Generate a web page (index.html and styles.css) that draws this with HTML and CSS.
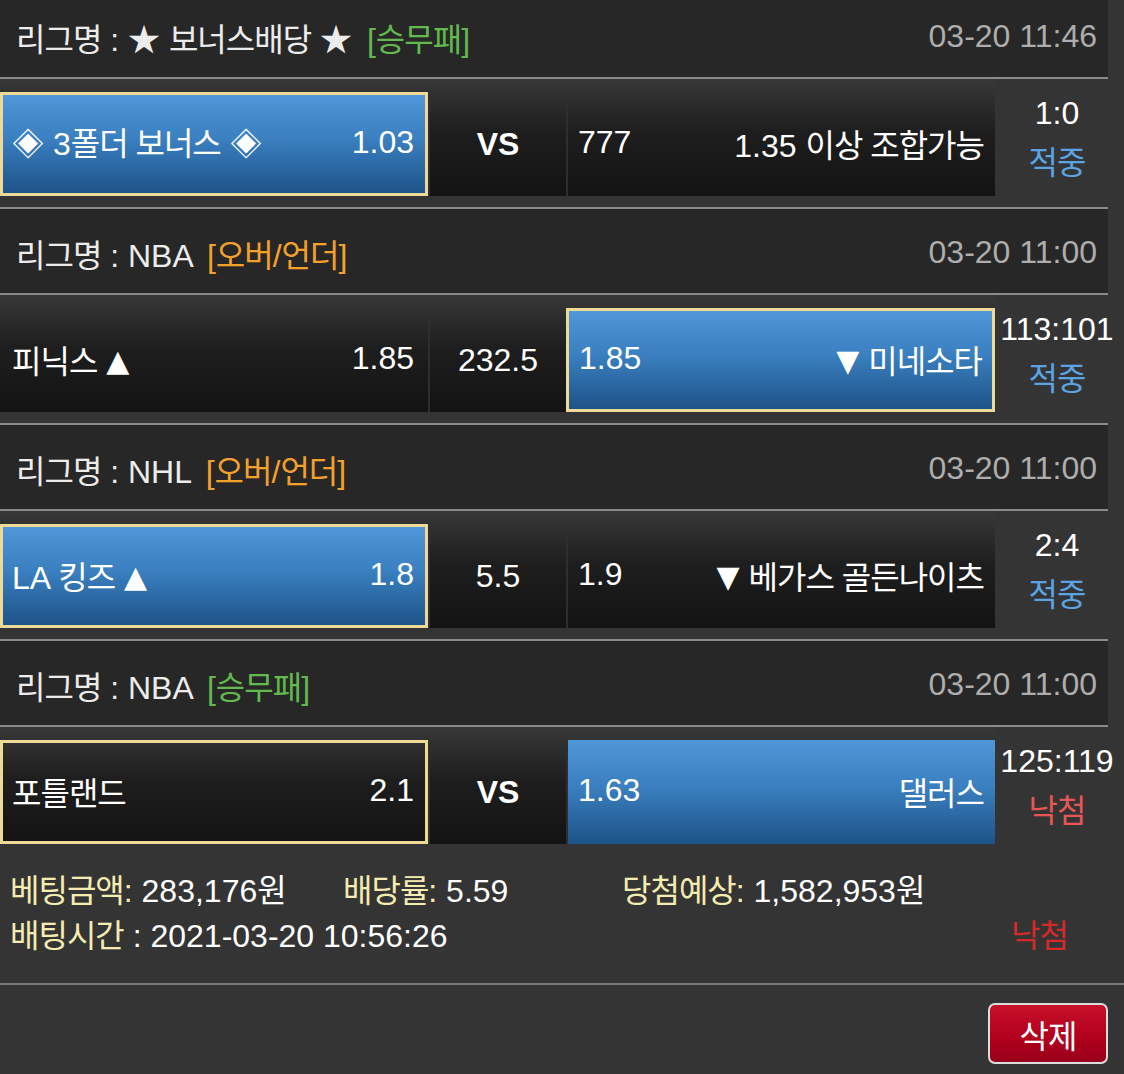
FILE: index.html
```html
<!DOCTYPE html>
<html lang="ko">
<head>
<meta charset="utf-8">
<title>배팅내역</title>
<link rel="stylesheet" href="styles.css">
</head>
<body>
<div class="board">
  <section class="game">
    <div class="league">
      <span class="lg-name"><span class="ko">리그명</span> : ★ <span class="ko">보너스배당</span> ★ <span class="tag green">[<span class="ko">승무패</span>]</span></span>
      <span class="time">03-20 11:46</span>
    </div>
    <div class="match">
      <div class="bets">
        <div class="cell side home pick win"><span>◈ 3<span class="ko">폴더 보너스</span> ◈</span><span>1.03</span></div>
        <div class="cell mid"><span class="vs">VS</span></div>
        <div class="cell side away"><span>777</span><span>1.35 <span class="ko">이상 조합가능</span></span></div>
      </div>
      <div class="result"><div class="score">1:0</div><div class="status hit ko">적중</div></div>
    </div>
  </section>

  <section class="game">
    <div class="league">
      <span class="lg-name"><span class="ko">리그명</span> : NBA <span class="tag orange">[<span class="ko">오버</span>/<span class="ko">언더</span>]</span></span>
      <span class="time">03-20 11:00</span>
    </div>
    <div class="match">
      <div class="bets">
        <div class="cell side home"><span><span class="ko">피닉스</span> <span class="tri">▲</span></span><span>1.85</span></div>
        <div class="cell mid"><span>232.5</span></div>
        <div class="cell side away pick win"><span>1.85</span><span><span class="tri">▼</span> <span class="ko">미네소타</span></span></div>
      </div>
      <div class="result"><div class="score">113:101</div><div class="status hit ko">적중</div></div>
    </div>
  </section>

  <section class="game">
    <div class="league">
      <span class="lg-name"><span class="ko">리그명</span> : NHL <span class="tag orange">[<span class="ko">오버</span>/<span class="ko">언더</span>]</span></span>
      <span class="time">03-20 11:00</span>
    </div>
    <div class="match">
      <div class="bets">
        <div class="cell side home pick win"><span>LA <span class="ko">킹즈</span> <span class="tri">▲</span></span><span>1.8</span></div>
        <div class="cell mid"><span>5.5</span></div>
        <div class="cell side away"><span>1.9</span><span><span class="tri">▼</span> <span class="ko">베가스 골든나이츠</span></span></div>
      </div>
      <div class="result"><div class="score">2:4</div><div class="status hit ko">적중</div></div>
    </div>
  </section>

  <section class="game last">
    <div class="league">
      <span class="lg-name"><span class="ko">리그명</span> : NBA <span class="tag green">[<span class="ko">승무패</span>]</span></span>
      <span class="time">03-20 11:00</span>
    </div>
    <div class="match">
      <div class="bets">
        <div class="cell side home pick"><span class="ko">포틀랜드</span><span>2.1</span></div>
        <div class="cell mid"><span class="vs">VS</span></div>
        <div class="cell side away win"><span>1.63</span><span class="ko">댈러스</span></div>
      </div>
      <div class="result"><div class="score">125:119</div><div class="status miss ko">낙첨</div></div>
    </div>
  </section>
</div>

<div class="summary">
  <div class="sum-row">
    <span class="col c1"><span class="label ko">베팅금액</span><span class="label">:</span> 283,176<span class="ko">원</span></span>
    <span class="col c2"><span class="label ko">배당률</span><span class="label">:</span> 5.59</span>
    <span class="col c3"><span class="label ko">당첨예상</span><span class="label">:</span> 1,582,953<span class="ko">원</span></span>
  </div>
  <div class="sum-row two">
    <span class="col"><span class="label ko">배팅시간</span> : 2021-03-20 10:56:26</span>
    <span class="final ko">낙첨</span>
  </div>
</div>

<div class="actions">
  <button class="btn-delete ko" type="button">삭제</button>
</div>
</body>
</html>
```

FILE: styles.css
```css
html, body {
  margin: 0;
  padding: 0;
}

body {
  background: #343434;
  color: #ffffff;
  font-family: "Liberation Sans", "Noto Sans CJK KR", sans-serif;
  font-size: 32px;
  width: 1124px;
  overflow: hidden;
}

.ko {
  letter-spacing: -1px;
}

.tri {
  font-family: "DejaVu Sans", sans-serif;
  font-size: 30px;
  vertical-align: 2px;
}

.board {
  width: 1108px;
  margin-top: -7px;
}

.league {
  box-sizing: content-box;
  height: 81px;
  padding: 3px 11px 0 16px;
  background: #272727;
  border-bottom: 2px solid #8a8a8a;
  display: flex;
  align-items: center;
  justify-content: space-between;
  color: #ececec;
  white-space: nowrap;
}

.tag {
  margin-left: 6px;
}

.green { color: #62b94e; }
.orange { color: #f4a12c; }

.time {
  color: #adadad;
}

.match {
  display: flex;
  height: 128px;
  border-bottom: 2px solid #8a8a8a;
}

.game.last .match {
  border-bottom: none;
}

.bets {
  flex: none;
  width: 995px;
  height: 117px;
  box-sizing: border-box;
  padding-top: 13px;
  display: flex;
  background: linear-gradient(to bottom, #383838 0%, #1e1e1e 45%, #131313 100%);
}

.cell {
  height: 104px;
  box-sizing: border-box;
  display: flex;
  align-items: center;
  white-space: nowrap;
  padding-bottom: 3px;
}

.side {
  justify-content: space-between;
}

.home {
  width: 428px;
  padding-left: 12px;
  padding-right: 14px;
}

.mid {
  width: 138px;
  justify-content: center;
  border-left: 2px solid #2e2e2e;
  padding-bottom: 0;
}

.away {
  width: 429px;
  padding-left: 10px;
  padding-right: 11px;
  border-left: 2px solid #2e2e2e;
}

.vs {
  font-weight: bold;
}

.cell.win {
  background: linear-gradient(to bottom, #4f97d8 0%, #3a7fc0 45%, #1d5387 100%);
}

.cell.pick {
  border: 3px solid #efd996;
}

.home.pick {
  padding-left: 9px;
  padding-right: 11px;
}

.away.pick {
  padding-left: 10px;
  padding-right: 10px;
}

.result {
  flex: none;
  width: 124px;
  display: flex;
  flex-direction: column;
  align-items: center;
  padding-top: 14px;
  white-space: nowrap;
}

.score {
  line-height: 40px;
}

.status {
  line-height: 40px;
  margin-top: 10px;
}

.hit { color: #5ba3e1; }
.miss { color: #e85656; }

.summary {
  height: 130px;
  box-sizing: border-box;
  padding: 10px 0 0 10px;
  border-bottom: 2px solid #7a7a7a;
}

.sum-row {
  display: flex;
  align-items: center;
  height: 45px;
  white-space: nowrap;
}

.label {
  color: #f4ecb0;
}

.c1 { width: 333px; }
.c2 { width: 279px; }

.two {
  justify-content: space-between;
  padding-right: 56px;
}

.final {
  color: #d62a2a;
}

.actions {
  display: flex;
  justify-content: flex-end;
  padding: 18px 16px 0 0;
}

.btn-delete {
  width: 120px;
  height: 61px;
  border: 2px solid #dcdcdc;
  border-radius: 7px;
  background: linear-gradient(to bottom, #c8102a 0%, #b0001c 60%, #98001a 100%);
  color: #ffffff;
  font-family: "Liberation Sans", "Noto Sans CJK KR", sans-serif;
  font-size: 32px;
  padding: 0;
}
```
